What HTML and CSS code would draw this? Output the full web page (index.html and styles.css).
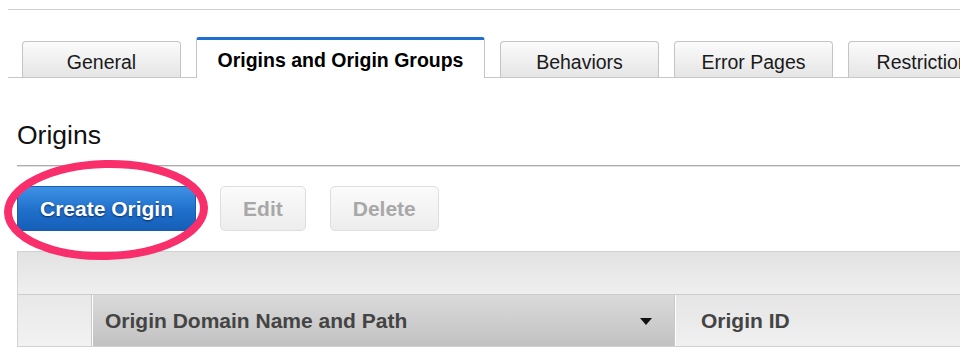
FILE: index.html
```html
<!DOCTYPE html>
<html lang="en">
<head>
<meta charset="utf-8">
<title>Origins and Origin Groups</title>
<link rel="stylesheet" href="styles.css">
</head>
<body>
<div class="topline"></div>
<nav class="tabs">
  <div class="tab">General</div>
  <div class="tab tab-active">Origins and Origin Groups</div>
  <div class="tab">Behaviors</div>
  <div class="tab">Error Pages</div>
  <div class="tab">Restrictions</div>
</nav>
<main class="content">
  <h1 class="title">Origins</h1>
  <div class="rule"></div>
  <div class="actions">
    <button class="btn btn-primary">Create Origin</button>
    <button class="btn btn-disabled">Edit</button>
    <button class="btn btn-disabled">Delete</button>
  </div>
  <div class="table">
    <div class="table-top"></div>
    <div class="table-head">
      <div class="cell cell-select"></div>
      <div class="cell cell-sorted"><span>Origin Domain Name and Path</span><svg class="caret" width="12" height="7" viewBox="0 0 12 7"><polygon points="0,0 12,0 6,7" fill="#111"/></svg></div>
      <div class="cell cell-id">Origin ID</div>
    </div>
  </div>
</main>
<svg class="annotation" width="230" height="280" viewBox="0 0 230 280">
  <ellipse cx="106" cy="210" rx="98" ry="46" fill="none" stroke="#f92f6c" stroke-width="8" transform="rotate(-1.5 106 210)"/>
</svg>
</body>
</html>
```
FILE: styles.css
```css
html, body {
  margin: 0;
  padding: 0;
  overflow: hidden;
  background: #ffffff;
}

body {
  position: relative;
  height: 352px;
  font-family: "Liberation Sans", Arial, Helvetica, sans-serif;
  color: #111;
}

.topline {
  margin: 9px 0 0 8px;
  border-top: 1px solid #cfcfcf;
}

.tabs {
  display: flex;
  align-items: flex-end;
  gap: 15px;
  height: 40px;
  margin: 27px 0 0 8px;
  padding-left: 14px;
  border-bottom: 1px solid #c8c8c8;
  white-space: nowrap;
}

.tab {
  flex: 0 0 auto;
  box-sizing: border-box;
  width: 159px;
  height: 36px;
  padding-top: 8px;
  line-height: 24px;
  font-size: 19.5px;
  text-align: center;
  color: #1a1a1a;
  border: 1px solid #c4c4c4;
  border-bottom: none;
  border-radius: 4px 4px 0 0;
  background: linear-gradient(#fbfbfb, #e5e5e5);
}

.tab-active {
  width: 289px;
  height: 41px;
  margin-bottom: -1px;
  border-top: 3px solid #1f6fd0;
  border-radius: 3px 3px 0 0;
  background: #ffffff;
  font-weight: bold;
  color: #000;
}

.content {
  padding-left: 17px;
}

.title {
  margin: 41px 0 0;
  font-size: 26.5px;
  font-weight: normal;
  line-height: 32px;
  color: #111;
}

.rule {
  margin-top: 14px;
  border-top: 1px solid #ababab;
  border-bottom: 1px solid #e2e2e2;
}

.actions {
  display: flex;
  gap: 24px;
  margin-top: 19px;
}

.btn {
  box-sizing: border-box;
  height: 45px;
  padding: 0 22px;
  font-family: "Liberation Sans", Arial, Helvetica, sans-serif;
  font-size: 21px;
  font-weight: bold;
  border-radius: 5px;
  cursor: default;
}

.btn-primary {
  color: #ffffff;
  border: 1px solid #1b5cae;
  background: linear-gradient(#3e92e4, #1f6fcb 55%, #155fb8);
  text-shadow: 0 1px 2px rgba(0, 20, 60, 0.75);
}

.btn-disabled {
  color: #a8a8a8;
  border: 1px solid #dedede;
  background: linear-gradient(#fbfbfb, #ededed);
}

.table {
  margin-top: 20px;
  border-left: 1px solid #d2d2d2;
}

.table-top {
  height: 42px;
  border-top: 1px solid #d0d0d0;
  border-bottom: 1px solid #cdcdcd;
  background: linear-gradient(#e2e2e2, #efefef);
}

.table-head {
  display: flex;
  height: 51px;
  border-bottom: 1px solid #d2d2d2;
}

.cell {
  box-sizing: border-box;
  display: flex;
  align-items: center;
  font-size: 21px;
  font-weight: bold;
  color: #444;
}

.cell-select {
  flex: 0 0 74px;
  border-right: 1px solid #cacaca;
  background: linear-gradient(#e8e8e8, #f2f2f2);
}

.cell-sorted {
  flex: 0 0 583px;
  justify-content: space-between;
  padding: 0 22px 0 12px;
  border-left: 1px solid #ffffff;
  border-right: 1px solid #c8c8c8;
  background: linear-gradient(#dadada, #c2c2c2);
}

.caret {
  display: block;
  margin-top: 1px;
}

.cell-id {
  flex: 1 1 auto;
  padding-left: 25px;
  border-left: 1px solid #ffffff;
  background: linear-gradient(#e5e5e5, #f0f0f0);
}

.annotation {
  position: absolute;
  left: 0;
  top: 0;
  pointer-events: none;
}
```
